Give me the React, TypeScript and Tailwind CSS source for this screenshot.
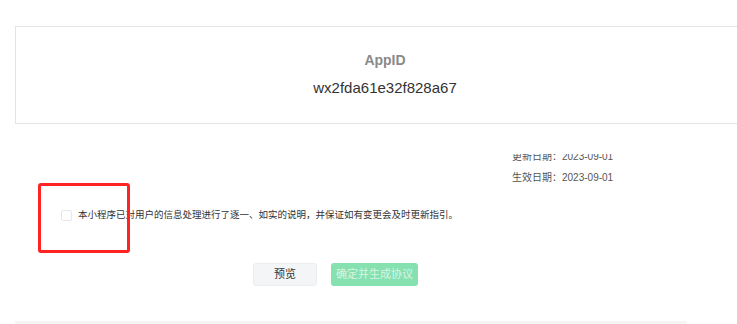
import React, { useState } from 'react';

const font = "font-['Liberation_Sans','Noto_Sans_CJK_SC',sans-serif]";

const App = () => {
  const [agreed, setAgreed] = useState(false);

  return (
    <div className={`relative w-[737px] h-[324px] overflow-hidden bg-white ${font}`}>
      {/* AppID card */}
      <div className="pt-[26px] pl-[15px]">
        <div className="w-[740px] h-[98px] border border-[#e4e4e4] flex flex-col items-center justify-center">
          <div className="text-[14px] font-bold text-[#8a8a8a] leading-[20px] mt-[-2px]">AppID</div>
          <div className="text-[15px] text-[#333] leading-[20px] mt-[8px]">wx2fda61e32f828a67</div>
        </div>
      </div>

      {/* Dates (first line scrolled partly out of view) */}
      <div className="ml-[512px] mt-[30px] h-[34px] overflow-hidden">
        <div className="-mt-[8px] text-[10px] text-[#555] leading-[21px]">
          <div>更新日期：2023-09-01</div>
          <div>生效日期：2023-09-01</div>
        </div>
      </div>

      {/* Agreement checkbox */}
      <label className="ml-[61px] mt-[20px] h-[14px] flex items-center gap-[6px] cursor-pointer">
        <span
          onClick={() => setAgreed(!agreed)}
          className="w-[11px] h-[11px] rounded-[2px] border border-[#e8e8e8] bg-white"
        />
        <span className="text-[9.5px] text-[#333] leading-[14px]">
          本小程序已对用户的信息处理进行了逐一、如实的说明，并保证如有变更会及时更新指引。
        </span>
      </label>

      {/* Buttons */}
      <div className="ml-[253px] mt-[41px] flex gap-[14px]">
        <button className="w-[64px] h-[23px] rounded-[3px] border border-[#ebedf0] bg-[#f4f5f7] text-[11px] text-[#333]">
          预览
        </button>
        <button className="w-[87px] h-[23px] rounded-[3px] bg-[#86e1b0] text-[11px] text-[#d6f5e4]">
          确定并生成协议
        </button>
      </div>

      {/* Footer strip */}
      <div className="ml-[15px] mt-[35px] w-[672px] h-[4px] bg-[#f5f5f6]" />

      {/* Annotation box */}
      <div className="absolute left-[38px] top-[183px] w-[92px] h-[70px] border-[3px] border-[#ff2323] rounded-[3px]" />
    </div>
  );
};

export default App;
